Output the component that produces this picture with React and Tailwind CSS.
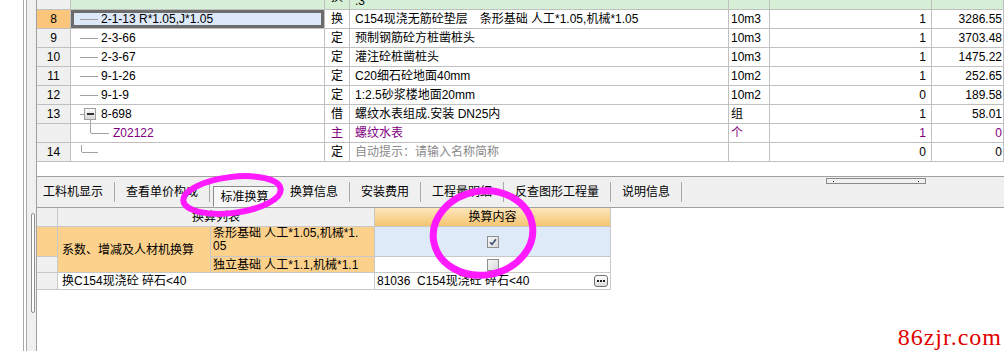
import React from "react";

const FONT = "font-['Liberation_Sans','Noto_Sans_CJK_SC',sans-serif]";
const LINE = "bg-[#a0a0a0]";

const ROWS = [
  { no: "8", code: "2-1-13 R*1.05,J*1.05", type: "换", name: "C154现浇无筋砼垫层\u3000条形基础 人工*1.05,机械*1.05", unit: "10m3", qty: "1", price: "3286.55", sel: true },
  { no: "9", code: "2-3-66", type: "定", name: "预制钢筋砼方桩凿桩头", unit: "10m3", qty: "1", price: "3703.48" },
  { no: "10", code: "2-3-67", type: "定", name: "灌注砼桩凿桩头", unit: "10m3", qty: "1", price: "1475.22" },
  { no: "11", code: "9-1-26", type: "定", name: "C20细石砼地面40mm", unit: "10m2", qty: "1", price: "252.65" },
  { no: "12", code: "9-1-9", type: "定", name: "1:2.5砂浆楼地面20mm", unit: "10m2", qty: "0", price: "189.58" },
  { no: "13", code: "8-698", type: "借", name: "螺纹水表组成.安装 DN25内", unit: "组", qty: "1", price: "58.01", tree: "open" },
  { no: "", code: "Z02122", type: "主", name: "螺纹水表", unit: "个", qty: "1", price: "0", tree: "child", purple: true },
  { no: "14", code: "", type: "定", name: "自动提示：请输入名称简称", unit: "", qty: "0", price: "0", tree: "last", hint: true },
];

const TABS = ["工料机显示", "查看单价构成", "标准换算", "换算信息", "安装费用", "工程量明细", "反查图形工程量", "说明信息"];

function Cell({ className = "", children }) {
  return (
    <div className={`flex items-center overflow-hidden whitespace-pre border-r border-b border-[#c0c0c0] ${className}`}>
      {children}
    </div>
  );
}

function CodeCell({ row }) {
  if (row.tree === "open") {
    return (
      <Cell className="pl-[9px]">
        <span className={`h-px w-[4px] ${LINE}`} />
        <div className="flex w-[12px] flex-col items-center self-stretch">
          <div className="flex-1" />
          <div className="flex h-[12px] w-[12px] items-center justify-center border border-[#a0a0a0] bg-gradient-to-b from-[#fafafa] to-[#d8d8d8]">
            <span className="h-[2px] w-[7px] bg-[#303030]" />
          </div>
          <div className={`w-px flex-1 ${LINE}`} />
        </div>
        <span className="ml-[5px]">{row.code}</span>
      </Cell>
    );
  }
  if (row.tree === "child") {
    return (
      <Cell className="pl-[19px] text-[#800080]">
        <div className="flex w-px flex-col self-stretch">
          <div className={`h-[9px] ${LINE}`} />
        </div>
        <span className={`h-px w-[18px] ${LINE}`} />
        <span className="ml-[4px]">{row.code}</span>
      </Cell>
    );
  }
  if (row.tree === "last") {
    return (
      <Cell className="pl-[10px]">
        <div className="flex w-px flex-col self-stretch pt-[2px]">
          <div className={`h-[7px] ${LINE}`} />
        </div>
        <span className={`h-px w-[16px] ${LINE}`} />
      </Cell>
    );
  }
  return (
    <Cell className={`pl-[9px] ${row.sel ? "bg-[#dde9f8] shadow-[inset_0_0_0_3px_#6c6c6c]" : ""}`}>
      <span className={`h-px w-[18px] ${LINE}`} />
      <span className="ml-[3px]">{row.code}</span>
    </Cell>
  );
}

function UpperGrid() {
  return (
    <div className="grid grid-cols-[34px_254px_25px_379px_41px_162px_72px] auto-rows-[19px]">
      {/* parent row, mostly scrolled off the top */}
      <Cell className="bg-[#f0f0f0]" />
      <Cell className="items-end bg-[#d6f0d7] pb-[8px] pl-[30px]">
        <span>2-1-10 R*1.05,J*1.05</span>
      </Cell>
      <Cell className="items-end justify-center bg-[#d6f0d7] pb-[5px]">
        <span>换</span>
      </Cell>
      <Cell className="items-end bg-[#d6f0d7] pb-px pl-[5px]">
        <span>.3</span>
      </Cell>
      <Cell className="bg-[#d6f0d7]" />
      <Cell className="bg-[#d6f0d7]" />
      <Cell className="bg-[#d6f0d7]" />

      {ROWS.map((r, i) => {
        const tone = r.purple ? "text-[#800080]" : "";
        return (
          <React.Fragment key={i}>
            <Cell className={`justify-center ${r.sel ? "bg-[#fcc57c]" : "bg-[#f0f0f0]"}`}>{r.no}</Cell>
            <CodeCell row={r} />
            <Cell className={`justify-center ${tone}`}>{r.type}</Cell>
            <Cell className={`pl-[5px] ${tone} ${r.hint ? "text-[#8a8a8a]" : ""}`}>{r.name}</Cell>
            <Cell className={`pl-[2px] ${tone}`}>{r.unit}</Cell>
            <Cell className={`justify-end pr-[5px] ${tone}`}>{r.qty}</Cell>
            <Cell className={`justify-end pr-[1px] ${tone}`}>{r.price}</Cell>
          </React.Fragment>
        );
      })}
    </div>
  );
}

function TabBar() {
  return (
    <div className="relative flex h-[32px] shrink-0 items-center gap-[11px] border-y border-[#a0a0a0] bg-[#f0f0f0] pl-[6px]">
      {TABS.map((t, i) => (
        <React.Fragment key={t}>
          {t === "标准换算" ? (
            <span className="-ml-[8px] mr-[3px] flex h-[21px] w-[63px] items-center justify-center self-end border border-[#8a8a8a] border-r-[#fdfdfd] border-b-[#fdfdfd] bg-[#f8f8f8]">
              {t}
            </span>
          ) : (
            <span>{t}</span>
          )}
          {t !== "标准换算" && <span className="h-[20px] w-px bg-[#a8a8a8]" />}
        </React.Fragment>
      ))}
      {/* splitter grip */}
      <div className="absolute left-[789px] top-px flex h-[6px] w-[100px] items-center justify-between border border-[#8a8a8a] px-[6px]">
        <span className="h-px w-px bg-black" />
        <span className="h-px w-px bg-black" />
      </div>
    </div>
  );
}

function Check({ on }) {
  return (
    <div className="flex h-[12px] w-[12px] items-center justify-center border border-[#8e8f8f] bg-gradient-to-br from-[#f6f6f6] to-[#d9d9d9]">
      {on && (
        <svg width="8" height="8" viewBox="0 0 8 8">
          <path d="M1 4.2 L3 6.2 L7 1.2" fill="none" stroke="#3d4f72" strokeWidth="1.6" />
        </svg>
      )}
    </div>
  );
}

function LowerTable() {
  const c = "flex items-center overflow-hidden whitespace-pre border-r border-b border-[#c8c8c8]";
  const orange = "bg-[#fcd18c]";
  return (
    <div className="grid w-[574px] grid-cols-[21px_153px_164px_236px] grid-rows-[19px_30px_16px_17px]">
      <div className={`${c} bg-[#f0f0f0]`} />
      <div className={`${c} col-span-2 justify-center bg-[#f0f0f0]`}>换算列表</div>
      <div className={`${c} justify-center bg-gradient-to-b from-[#fde6bb] to-[#f5c570]`}>换算内容</div>

      <div className={`${c} ${orange}`} />
      <div className={`${c} row-span-2 pl-[4px] ${orange}`}>系数、增减及人材机换算</div>
      <div className={`${c} items-start pl-[2px] leading-[13px] ${orange}`}>
        <span>
          条形基础 人工*1.05,机械*1.
          <br />
          05
        </span>
      </div>
      <div className={`${c} justify-center bg-[#dfeaf8]`}>
        <Check on />
      </div>

      <div className={`${c} bg-[#f0f0f0]`} />
      <div className={`${c} pl-[2px] ${orange}`}>独立基础 人工*1.1,机械*1.1</div>
      <div className={`${c} justify-center`}>
        <Check />
      </div>

      <div className={`${c} bg-[#f0f0f0]`} />
      <div className={`${c} col-span-2 pl-[4px]`}>换C154现浇砼 碎石&lt;40</div>
      <div className={`${c} justify-between pl-[2px] pr-[2px]`}>
        <span>81036  C154现浇砼 碎石&lt;40</span>
        <span className="flex h-[12px] w-[14px] items-center justify-center gap-[1px] rounded-[3px] border border-[#6f6f6f] bg-gradient-to-b from-[#ffffff] to-[#dcdcdc]">
          <span className="h-[2px] w-[2px] bg-[#202020]" />
          <span className="h-[2px] w-[2px] bg-[#202020]" />
          <span className="h-[2px] w-[2px] bg-[#202020]" />
        </span>
      </div>
    </div>
  );
}

export default function App() {
  return (
    <div className={`relative flex h-[351px] w-[1004px] overflow-hidden bg-white text-[12px] leading-[14px] text-black ${FONT}`}>
      {/* left frame strip */}
      <div className="flex h-full w-[37px] shrink-0">
        <div className="w-[23px]" />
        <div className="w-[4px] border-x border-[#a8a8a8]" />
        <div className="flex w-[10px] flex-col border-r border-[#a0a0a0] bg-[#f0f0f0] pl-[4px] pt-[213px]">
          <div className="h-[100px] w-[4px] rounded-sm border border-[#909090] bg-white" />
        </div>
      </div>

      <div className="flex min-w-0 flex-1 flex-col">
        <div className="-mt-[9px]">
          <UpperGrid />
        </div>
        <div className="h-[14px] shrink-0" />
        <TabBar />
        <LowerTable />
      </div>

      <svg className="pointer-events-none absolute left-0 top-0" width="1004" height="351">
        <ellipse cx="232" cy="195" rx="49" ry="18" fill="none" stroke="#ff1aff" strokeWidth="6" transform="rotate(-7 232 195)" />
        <ellipse cx="483" cy="233" rx="50" ry="42" fill="none" stroke="#ff1aff" strokeWidth="7" transform="rotate(-10 483 233)" />
      </svg>

      <span className="absolute bottom-[2px] right-[2px] font-['Liberation_Serif',serif] text-[24px] leading-none tracking-[1px] text-[#e00000]">
        86zjr.com
      </span>
    </div>
  );
}
